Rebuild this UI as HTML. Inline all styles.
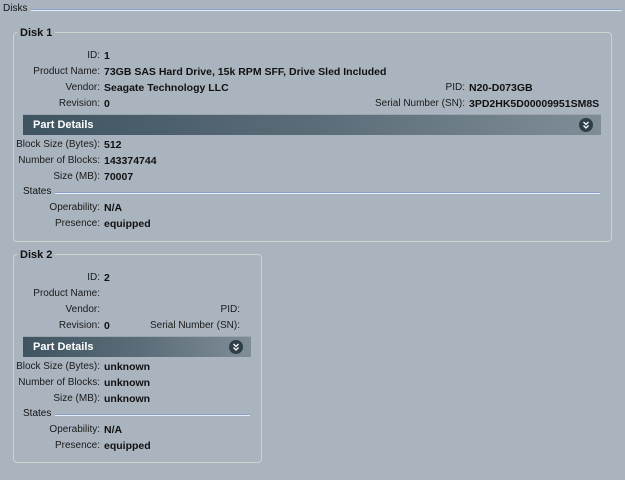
<!DOCTYPE html>
<html><head><style>
body{margin:0;width:625px;height:480px;background:#aab4bf;font-family:"Liberation Sans",sans-serif;font-size:10px;color:#111;position:relative;overflow:hidden}
.a{position:absolute;white-space:nowrap;line-height:12px}
.l{text-align:right;color:#1a1a1a}
.v{font-weight:bold;font-size:10.5px}
.box{position:absolute;border:1px solid #cfd3cf;border-radius:4px}
.t{position:absolute;background:#aab4bf;font-weight:bold;font-size:11px;padding:0 3px}
.bar{position:absolute;height:21px;background:linear-gradient(90deg,#3f5461,#5a6c78 50%,#7f8d97);color:#fff;font-weight:bold;font-size:11px;line-height:21px;padding-left:10px;box-sizing:border-box;border-top:1px solid #9aa5ae}
.ic{position:absolute;right:8px;top:3px;width:14px;height:14px}
.hl{position:absolute;height:1px;background:#8aa0c8;border-bottom:1px solid #e8eef8}
</style></head><body>
<div class="a" style="left:3px;top:3px;font-size:10px">Disks</div>
<div class="hl" style="left:31px;top:9px;width:591px"></div>

<div class="box" style="left:13px;top:32px;width:597px;height:208px"></div>
<div class="t" style="left:17px;top:27px">Disk 1</div>
<div class="a l" style="left:0;width:100px;top:50px">ID:</div><div class="a v" style="left:104px;top:50px">1</div>
<div class="a l" style="left:0;width:100px;top:66px">Product Name:</div><div class="a v" style="left:104px;top:66px">73GB SAS Hard Drive, 15k RPM SFF, Drive Sled Included</div>
<div class="a l" style="left:0;width:100px;top:82px">Vendor:</div><div class="a v" style="left:104px;top:82px">Seagate Technology LLC</div>
<div class="a l" style="left:0;width:100px;top:98px">Revision:</div><div class="a v" style="left:104px;top:98px">0</div>
<div class="a l" style="left:300px;width:165px;top:82px">PID:</div><div class="a v" style="left:469px;top:82px">N20-D073GB</div>
<div class="a l" style="left:300px;width:165px;top:98px">Serial Number (SN):</div><div class="a v" style="left:469px;top:98px">3PD2HK5D00009951SM8S</div>
<div class="bar" style="left:23px;top:114px;width:578px">Part Details<svg class="ic" viewBox="0 0 14 14"><circle cx="7" cy="7" r="7" fill="#2d3e48"/><path d="M4.5 4l2.5 2.5 2.5-2.5M4.5 7.5l2.5 2.5 2.5-2.5" stroke="#fff" stroke-width="1.3" fill="none"/></svg></div>
<div class="a l" style="left:0;width:100px;top:139px">Block Size (Bytes):</div><div class="a v" style="left:104px;top:139px">512</div>
<div class="a l" style="left:0;width:100px;top:155px">Number of Blocks:</div><div class="a v" style="left:104px;top:155px">143374744</div>
<div class="a l" style="left:0;width:100px;top:171px">Size (MB):</div><div class="a v" style="left:104px;top:171px">70007</div>
<div class="a" style="left:23px;top:186px">States</div>
<div class="hl" style="left:55px;top:192px;width:545px"></div>
<div class="a l" style="left:0;width:100px;top:202px">Operability:</div><div class="a v" style="left:104px;top:202px">N/A</div>
<div class="a l" style="left:0;width:100px;top:218px">Presence:</div><div class="a v" style="left:104px;top:218px">equipped</div>

<div class="box" style="left:13px;top:254px;width:247px;height:207px"></div>
<div class="t" style="left:17px;top:249px">Disk 2</div>
<div class="a l" style="left:0;width:100px;top:272px">ID:</div><div class="a v" style="left:104px;top:272px">2</div>
<div class="a l" style="left:0;width:100px;top:288px">Product Name:</div>
<div class="a l" style="left:0;width:100px;top:304px">Vendor:</div>
<div class="a l" style="left:0;width:100px;top:320px">Revision:</div><div class="a v" style="left:104px;top:320px">0</div>
<div class="a l" style="left:120px;width:120px;top:304px">PID:</div>
<div class="a l" style="left:120px;width:120px;top:320px">Serial Number (SN):</div>
<div class="bar" style="left:23px;top:336px;width:228px">Part Details<svg class="ic" viewBox="0 0 14 14"><circle cx="7" cy="7" r="7" fill="#2d3e48"/><path d="M4.5 4l2.5 2.5 2.5-2.5M4.5 7.5l2.5 2.5 2.5-2.5" stroke="#fff" stroke-width="1.3" fill="none"/></svg></div>
<div class="a l" style="left:0;width:100px;top:361px">Block Size (Bytes):</div><div class="a v" style="left:104px;top:361px">unknown</div>
<div class="a l" style="left:0;width:100px;top:377px">Number of Blocks:</div><div class="a v" style="left:104px;top:377px">unknown</div>
<div class="a l" style="left:0;width:100px;top:393px">Size (MB):</div><div class="a v" style="left:104px;top:393px">unknown</div>
<div class="a" style="left:23px;top:408px">States</div>
<div class="hl" style="left:55px;top:414px;width:195px"></div>
<div class="a l" style="left:0;width:100px;top:424px">Operability:</div><div class="a v" style="left:104px;top:424px">N/A</div>
<div class="a l" style="left:0;width:100px;top:440px">Presence:</div><div class="a v" style="left:104px;top:440px">equipped</div>
</body></html>
